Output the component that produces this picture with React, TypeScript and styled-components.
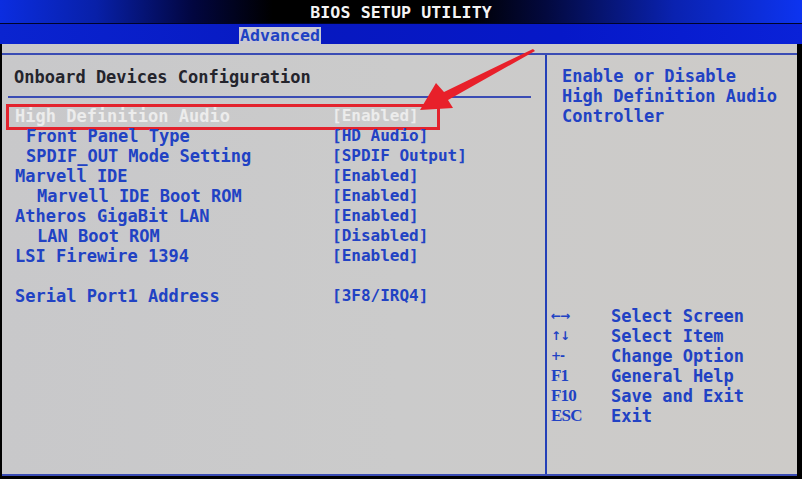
import React from 'react'
import styled, { createGlobalStyle } from 'styled-components'

const GlobalStyle = createGlobalStyle`
  html, body {
    margin: 0;
    padding: 0;
    background: #000;
  }
  body {
    font-family: "DejaVu Sans Mono", "Liberation Mono", monospace;
  }
`

const BLUE_TEXT = '#2142c4'
const LINE = '#3a4cb4'

const Screen = styled.div`
  width: 802px;
  height: 479px;
  background: #000;
  display: flex;
  flex-direction: column;
  overflow: hidden;
  position: relative;
`

const TitleBar = styled.div`
  height: 22px;
  padding-top: 1px;
  border-bottom: 1px solid #000428;
  background: linear-gradient(
    90deg,
    #0b2de0 0%,
    #0820a8 12%,
    #020640 24%,
    #000 34%,
    #000 58%,
    #03093e 68%,
    #0a22b0 84%,
    #0d34f0 100%
  );
  display: flex;
  align-items: center;
  justify-content: center;
  color: #f4f4f4;
  font-weight: bold;
  font-size: 16.6px;
  letter-spacing: 0.1px;
`

const MenuBar = styled.div`
  height: 17px;
  padding: 3px 0 0 239px;
  background: linear-gradient(90deg, #0a24d0 0%, #0718c0 40%, #0618c8 70%, #0a22d8 100%);
  display: flex;
`

const Tab = styled.div`
  height: 17px;
  width: 81px;
  background: #c9c9d2;
  color: ${BLUE_TEXT};
  font-weight: bold;
  font-size: 16.6px;
  line-height: 17px;
  padding-left: 1px;
`

const Body = styled.div`
  flex: 1;
  margin: 0 5px 3px 2px;
  padding-top: 9px;
  background: linear-gradient(90deg, #c8c8ca 0%, #cbcbcb 50%, #cdcbc8 100%);
  display: flex;
  flex-direction: column;
`

const Frame = styled.div`
  flex: 1;
  border-top: 2px solid ${LINE};
  border-bottom: 2px solid ${LINE};
  display: grid;
  grid-template-columns: 543px 2px 1fr;
`

const Divider = styled.div`
  background: #2440b8;
`

const LeftPane = styled.div`
  padding-top: 12px;
  position: relative;
`

const Heading = styled.div`
  padding-left: 12px;
  height: 20px;
  line-height: 20px;
  font-size: 17px;
  font-weight: bold;
  color: #24242c;
`

const Rule = styled.div`
  height: 2px;
  margin: 9px 14px 8px 6px;
  background: ${LINE};
`

const RowList = styled.div`
  padding-left: 4px;
  display: flex;
  flex-direction: column;
`

const Row = styled.div<{ $marked?: boolean; $selected?: boolean }>`
  position: relative;
  width: 434px;
  height: 20px;
  display: grid;
  grid-template-columns: 326px auto;
  line-height: 20px;
  font-size: 17px;
  font-weight: bold;
  white-space: nowrap;
  color: ${(p) => (p.$selected ? '#ececec' : BLUE_TEXT)};

  ${(p) =>
    p.$marked &&
    `
    &::after {
      content: '';
      position: absolute;
      left: 0;
      right: 0;
      top: -2px;
      bottom: -4px;
      border: 3px solid #e3232e;
      pointer-events: none;
    }
  `}
`

const Label = styled.span<{ $indent: number }>`
  padding-left: ${(p) => 9 + p.$indent * 11}px;
`

const Value = styled.span`
  font-size: 16px;
`

const Spacer = styled.div`
  height: 20px;
`

const RightPane = styled.div`
  padding: 11px 0 48px 4px;
  display: flex;
  flex-direction: column;
`

const Help = styled.div`
  padding-left: 11px;
  font-size: 17px;
  font-weight: bold;
  line-height: 20px;
  color: ${BLUE_TEXT};
`

const Legend = styled.div`
  margin-top: auto;
  display: flex;
  flex-direction: column;
`

const LegendRow = styled.div`
  display: grid;
  grid-template-columns: 60px auto;
  height: 20px;
  line-height: 20px;
  color: ${BLUE_TEXT};
  font-weight: bold;
`

const Key = styled.span<{ $glyph?: boolean }>`
  font-family: ${(p) => (p.$glyph ? '"DejaVu Sans", sans-serif' : '"Liberation Serif", serif')};
  font-size: ${(p) => (p.$glyph ? '12px' : '17px')};
  letter-spacing: ${(p) => (p.$glyph ? '-1px' : '-0.8px')};
`

const Desc = styled.span`
  font-size: 17px;
`

const Arrow = styled.svg`
  position: absolute;
  left: 0;
  top: 0;
  pointer-events: none;
`

type Item = { label: string; value: string; indent: number; selected?: boolean; gapBefore?: boolean }

const items: Item[] = [
  { label: 'High Definition Audio', value: '[Enabled]', indent: 0, selected: true },
  { label: 'Front Panel Type', value: '[HD Audio]', indent: 1 },
  { label: 'SPDIF_OUT Mode Setting', value: '[SPDIF Output]', indent: 1 },
  { label: 'Marvell IDE', value: '[Enabled]', indent: 0 },
  { label: 'Marvell IDE Boot ROM', value: '[Enabled]', indent: 2 },
  { label: 'Atheros GigaBit LAN', value: '[Enabled]', indent: 0 },
  { label: 'LAN Boot ROM', value: '[Disabled]', indent: 2 },
  { label: 'LSI Firewire 1394', value: '[Enabled]', indent: 0 },
  { label: 'Serial Port1 Address', value: '[3F8/IRQ4]', indent: 0, gapBefore: true },
]

const keys = [
  { key: '←→', glyph: true, desc: 'Select Screen' },
  { key: '↑↓', glyph: true, desc: 'Select Item' },
  { key: '+-', glyph: true, desc: 'Change Option' },
  { key: 'F1', desc: 'General Help' },
  { key: 'F10', desc: 'Save and Exit' },
  { key: 'ESC', desc: 'Exit' },
]

export default function App() {
  return (
    <>
      <GlobalStyle />
      <Screen>
        <TitleBar>BIOS SETUP UTILITY</TitleBar>
        <MenuBar>
          <Tab>Advanced</Tab>
        </MenuBar>
        <Body>
          <Frame>
            <LeftPane>
              <Heading>Onboard Devices Configuration</Heading>
              <Rule />
              <RowList>
                {items.map((it) => (
                  <React.Fragment key={it.label}>
                    {it.gapBefore && <Spacer />}
                    <Row $selected={it.selected} $marked={it.selected}>
                      <Label $indent={it.indent}>{it.label}</Label>
                      <Value>{it.value}</Value>
                    </Row>
                  </React.Fragment>
                ))}
              </RowList>
            </LeftPane>
            <Divider />
            <RightPane>
              <Help>Enable or Disable</Help>
              <Help>High Definition Audio</Help>
              <Help>Controller</Help>
              <Legend>
                {keys.map((k) => (
                  <LegendRow key={k.desc}>
                    <Key $glyph={k.glyph}>{k.key}</Key>
                    <Desc>{k.desc}</Desc>
                  </LegendRow>
                ))}
              </Legend>
            </RightPane>
          </Frame>
        </Body>
        {/* red annotation arrow drawn over the screen */}
        <Arrow width="802" height="479" viewBox="0 0 802 479">
          <polygon
            points="420,110 436,83 444,92 533,49 535,51 448,100 453,108"
            fill="#e8202a"
          />
        </Arrow>
      </Screen>
    </>
  )
}
